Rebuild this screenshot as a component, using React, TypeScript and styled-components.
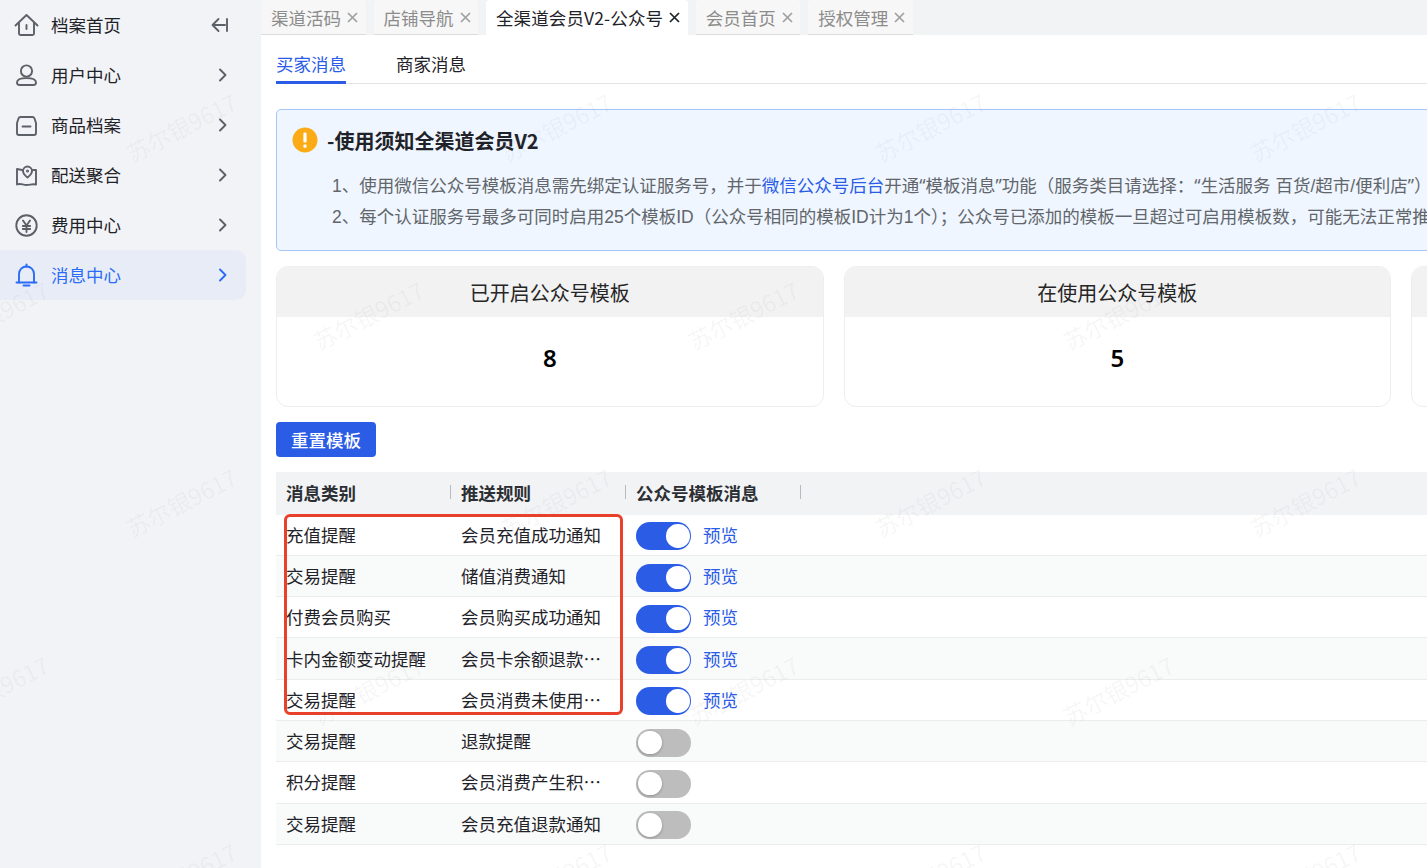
import React from 'react';
import styled, { createGlobalStyle } from 'styled-components';

const Global = createGlobalStyle`
  html, body { margin: 0; padding: 0; background: #fff; }
  body { font-family: "Noto Sans CJK SC", "Noto Sans", sans-serif; color: #1f2329; }
  * { box-sizing: border-box; }
`;

const Page = styled.div`
  position: relative;
  display: flex;
  width: 1427px;
  height: 868px;
  overflow: hidden;
  font-size: 17.5px;
`;

const Sidebar = styled.aside`
  flex: 0 0 261px;
  background: #f2f3f6;
  display: flex;
  flex-direction: column;
  padding-right: 15px;
`;

const NavRow = styled.div<{ $active?: boolean }>`
  height: 50px;
  display: flex;
  align-items: center;
  padding: 0 17px 0 14px;
  border-radius: 0 10px 10px 0;
  background: ${p => (p.$active ? '#e8ecf7' : 'transparent')};
  color: ${p => (p.$active ? '#2b6cf6' : '#1f2329')};
  svg { flex: none; }
`;

const NavLabel = styled.span`
  margin-left: 12px;
  flex: 1;
  line-height: 50px;
`;

const Main = styled.main`
  flex: 1;
  min-width: 0;
  display: flex;
  flex-direction: column;
  overflow: hidden;
`;

const TabBar = styled.div`
  height: 35px;
  flex: none;
  background: #f2f3f5;
  display: flex;
  gap: 8px;
`;

const Tab = styled.div<{ $active?: boolean }>`
  height: 35px;
  padding: 0 7.5px 0 10px;
  display: flex;
  align-items: center;
  gap: 6px;
  white-space: nowrap;
  letter-spacing: ${p => (p.$active ? '0.12px' : '0')};
  border-radius: 4px 4px 0 0;
  background: ${p => (p.$active ? '#fff' : '#f7f7f7')};
  border-bottom: ${p => (p.$active ? 'none' : '1px solid #dcdcdc')};
  color: ${p => (p.$active ? '#1f2329' : '#8c8c8c')};
  svg { flex: none; }
`;

const Content = styled.div`
  flex: 1;
  padding: 0 0 0 15px;
  background: #fff;
  width: 1320px;
`;

const SubTabs = styled.div`
  height: 49px;
  display: flex;
  gap: 50px;
  border-bottom: 1px solid #e3e4e6;
`;

const SubTab = styled.div<{ $active?: boolean }>`
  height: 49px;
  line-height: 58px;
  color: ${p => (p.$active ? '#2b5ce6' : '#1f2329')};
  border-bottom: ${p => (p.$active ? '3px solid #2b5ce6' : 'none')};
`;

const Notice = styled.section`
  margin-top: 25px;
  height: 142px;
  border: 1px solid #a9c6fb;
  border-radius: 5px;
  background: #eff6ff;
  padding: 16px 0 0 15px;
`;

const NoticeHead = styled.div`
  display: flex;
  align-items: center;
  gap: 9px;
  height: 28px;
`;

const NoticeTitle = styled.h2`
  margin: 0;
  font-size: 20px;
  font-weight: 700;
  color: #1f2329;
`;

const NoticeLine = styled.p`
  margin: 0 0 0 40px;
  height: 32px;
  line-height: 32px;
  white-space: nowrap;
  color: #62666b;
  font-family: "Liberation Sans", "Noto Sans CJK SC", sans-serif;
  &:first-of-type { margin-top: 15px; }
`;

const Quote = styled.span`
  font-family: "Noto Sans", sans-serif;
`;

const Link = styled.a`
  color: #2b5ce6;
`;

const Cards = styled.div`
  margin-top: 15px;
  display: flex;
  gap: 20px;
`;

const Card = styled.div`
  flex: 0 0 547.5px;
  height: 141px;
  border: 1px solid #eeeeee;
  border-radius: 12px;
  overflow: hidden;
`;

const CardHead = styled.div`
  height: 50px;
  background: #f2f2f2;
  text-align: center;
  line-height: 52px;
  font-size: 20px;
  color: #262626;
`;

const CardValue = styled.div`
  height: 80px;
  display: flex;
  align-items: center;
  justify-content: center;
  font-size: 24px;
  font-weight: 600;
  color: #000;
  font-family: "Noto Sans", sans-serif;
`;

const Reset = styled.button`
  display: block;
  margin-top: 15px;
  width: 100px;
  height: 35px;
  border: 0;
  border-radius: 4px;
  background: #2b5ce6;
  color: #fff;
  font: 500 17.5px "Noto Sans CJK SC", "Noto Sans", sans-serif;
  padding: 0;
`;

const Table = styled.div`
  margin-top: 15px;
`;

const Row = styled.div<{ $alt?: boolean }>`
  height: 41.28px;
  display: grid;
  grid-template-columns: 175px 175px 1fr;
  align-items: center;
  border-bottom: 1px solid #ebedec;
  background: ${p => (p.$alt ? '#f9fafa' : '#fff')};
`;

const HeadRow = styled.div`
  height: 42.7px;
  display: grid;
  grid-template-columns: 175px 175px 175px;
  align-items: center;
  background: #f2f3f5;
`;

const HeadCell = styled.div`
  position: relative;
  padding: 0 0 2px 10px;
  font-weight: 700;
  color: #2c2f33;
  &::after {
    content: "";
    position: absolute;
    right: 0;
    top: 50%;
    margin-top: -8px;
    width: 1px;
    height: 14px;
    background: #b4bac4;
  }
`;

const Cell = styled.div`
  padding: 0 0 1px 10px;
  overflow: hidden;
  line-height: 39px;
  color: #1f2329;
`;

const RuleText = styled.div`
  max-width: 140px;
  overflow: hidden;
  white-space: nowrap;
  text-overflow: ellipsis;
`;

const SwitchCell = styled.div`
  display: flex;
  align-items: center;
  padding: 3px 0 0 10px;
  gap: 12px;
`;

const Toggle = styled.div<{ $on: boolean }>`
  position: relative;
  width: 55px;
  height: 28px;
  border-radius: 14px;
  background: ${p => (p.$on ? '#2b5ce6' : '#bdbdbd')};
`;

const Knob = styled.div<{ $on: boolean }>`
  position: absolute;
  top: 2px;
  left: ${p => (p.$on ? '30px' : '2px')};
  width: 23.5px;
  height: 23.5px;
  border-radius: 50%;
  background: #fff;
  box-shadow: ${p => (p.$on ? 'none' : '0 1px 3px rgba(0,0,0,0.25)')};
`;

const Preview = styled.a`
  color: #2b5ce6;
  margin-bottom: 4px;
`;

const Annotation = styled.div`
  position: absolute;
  left: 284px;
  top: 514px;
  width: 339px;
  height: 201px;
  border: 3px solid #e8402a;
  border-radius: 6px;
  pointer-events: none;
`;

const Mark = styled.div`
  position: absolute;
  font-size: 23px;
  line-height: 34px;
  color: rgba(120, 125, 135, 0.07);
  transform: rotate(-27deg);
  white-space: nowrap;
  pointer-events: none;
  font-family: "Noto Sans CJK SC", sans-serif;
`;

const Ic: React.FC<{ children: React.ReactNode; size?: number }> = ({ children, size = 25 }) => (
  <svg width={size} height={size} viewBox="0 0 25 25" fill="none" stroke="currentColor" strokeWidth="1.9" strokeLinecap="round" strokeLinejoin="round">
    {children}
  </svg>
);

const grey = '#5c6068';

const icons = [
  <Ic key="h"><g stroke={grey}><path d="M1.5 12.5 12.5 2l11 10.5" /><path d="M5 10v10.5a1.5 1.5 0 0 0 1.5 1.5h12a1.5 1.5 0 0 0 1.5-1.5V10" /><path d="M12.5 12v4" /></g></Ic>,
  <Ic key="u"><g stroke={grey}><circle cx="12.5" cy="8" r="5.6" /><path d="M3 19.5c0-2.8 4-4.4 9.5-4.4S22 16.7 22 19.5c0 1.6-1 2.5-2.6 2.5H5.600C4 22 3 21.1 3 19.500z" /></g></Ic>,
  <Ic key="p"><g stroke={grey}><path d="M6.500 4h12c1 0 1.700.6 2 1.500L22 10v10a2 2 0 0 1-2 2H5a2 2 0 0 1-2-2V10l1.500-4.500C4.800 4.600 5.500 4 6.500 4z" /><path d="M8.500 13.500h8" /></g></Ic>,
  <Ic key="m"><g stroke={grey}><path d="M8 7 3 6v15.500c3-1.500 6 .5 9.500.5s6-1.500 9.500-.5V7h-3" /><path d="M13.500 14.500c-2.500-2-4.500-4-4.500-6.500a4.500 4.500 0 0 1 9 0c0 2.500-2 4.500-4.500 6.500z" /><circle cx="13.500" cy="8" r=".6" /></g></Ic>,
  <Ic key="y"><g stroke={grey}><circle cx="12.500" cy="12.500" r="10.200" /><path d="m9 7.500 3.500 5 3.500-5M8.800 13h7.400M8.800 16h7.400M12.500 12.500V19" /></g></Ic>,
  <Ic key="b"><path d="M5 19.500V11a7.500 7.500 0 0 1 15 0v8.500" /><path d="M2.500 19.500h20" /><path d="M9.500 22.500h6" /><path d="M12.500 1.500v2" /></Ic>,
];

const Chevron = ({ color = '#5c6068' }: { color?: string }) => (
  <svg width="12" height="14" viewBox="0 0 12 14" fill="none" stroke={color} strokeWidth="1.900" strokeLinecap="round" strokeLinejoin="round">
    <path d="m3 1.500 5.500 5.500L3 12.500" />
  </svg>
);

const Collapse = () => (
  <svg width="18" height="16" viewBox="0 0 18 16" fill="none" stroke="#5c6068" strokeWidth="1.900" strokeLinecap="round" strokeLinejoin="round">
    <path d="M1.500 8H14M7.500 2 1.500 8l6 6M16 2v12" />
  </svg>
);

const Close = ({ color }: { color: string }) => (
  <svg width="11" height="11" viewBox="0 0 11 11" fill="none" stroke={color} strokeWidth="1.700">
    <path d="m1 1 9 9M10 1l-9 9" />
  </svg>
);

const Warn = () => (
  <svg width="26" height="26" viewBox="0 0 26 26">
    <circle cx="13" cy="13" r="12.500" fill="#fbab15" />
    <rect x="11.400" y="5.500" width="3.200" height="10" rx="1.300" fill="#fff" />
    <rect x="11.400" y="17.500" width="3.200" height="3.200" rx="1" fill="#fff" />
  </svg>
);

const nav = ['档案首页', '用户中心', '商品档案', '配送聚合', '费用中心', '消息中心'];
const tabs = ['渠道活码', '店铺导航', '全渠道会员V2-公众号', '会员首页', '授权管理'];
const rows: [string, string, boolean][] = [
  ['充值提醒', '会员充值成功通知', true],
  ['交易提醒', '储值消费通知', true],
  ['付费会员购买', '会员购买成功通知', true],
  ['卡内金额变动提醒', '会员卡余额退款通知提醒', true],
  ['交易提醒', '会员消费未使用提醒通知', true],
  ['交易提醒', '退款提醒', false],
  ['积分提醒', '会员消费产生积分通知', false],
  ['交易提醒', '会员充值退款通知', false],
];
const centers: [number, number][] = [
  [181, 127], [556, 127], [930, 127], [1305, 127],
  [-7, 315], [368, 315], [743, 315], [1118, 315],
  [181, 502], [556, 502], [930, 502], [1305, 502],
  [-7, 690], [368, 690], [743, 690], [1118, 690],
  [181, 877], [556, 877], [930, 877], [1305, 877],
];

export default function App() {
  return (
    <Page lang="zh-CN">
      <Global />
      <Sidebar>
        {nav.map((n, i) => (
          <NavRow key={n} $active={i === 5}>
            {icons[i]}
            <NavLabel>{n}</NavLabel>
            {i === 0 ? <Collapse /> : <Chevron color={i === 5 ? '#2b6cf6' : '#5c6068'} />}
          </NavRow>
        ))}
      </Sidebar>
      <Main>
        <TabBar>
          {tabs.map((t, i) => (
            <Tab key={t} $active={i === 2}>
              {t}
              <Close color={i === 2 ? '#1f2329' : '#a0a0a0'} />
            </Tab>
          ))}
        </TabBar>
        <Content>
          <SubTabs>
            <SubTab $active>买家消息</SubTab>
            <SubTab>商家消息</SubTab>
          </SubTabs>
          <Notice>
            <NoticeHead>
              <Warn />
              <NoticeTitle>-使用须知全渠道会员V2</NoticeTitle>
            </NoticeHead>
            <NoticeLine>
              1、使用微信公众号模板消息需先绑定认证服务号，并于<Link>微信公众号后台</Link>开通<Quote>“</Quote>模板消息<Quote>”</Quote>功能（服务类目请选择：<Quote>“</Quote>生活服务 百货/超市/便利店<Quote>”</Quote>）
            </NoticeLine>
            <NoticeLine>
              2、每个认证服务号最多可同时启用25个模板ID（公众号相同的模板ID计为1个）；公众号已添加的模板一旦超过可启用模板数，可能无法正常推送
            </NoticeLine>
          </Notice>
          <Cards>
            <Card>
              <CardHead>已开启公众号模板</CardHead>
              <CardValue>8</CardValue>
            </Card>
            <Card>
              <CardHead>在使用公众号模板</CardHead>
              <CardValue>5</CardValue>
            </Card>
            <Card>
              <CardHead />
            </Card>
          </Cards>
          <Reset>重置模板</Reset>
          <Table>
            <HeadRow>
              <HeadCell>消息类别</HeadCell>
              <HeadCell>推送规则</HeadCell>
              <HeadCell>公众号模板消息</HeadCell>
            </HeadRow>
            {rows.map(([a, b, on], i) => (
              <Row key={i} $alt={i % 2 === 1}>
                <Cell>{a}</Cell>
                <Cell><RuleText>{b}</RuleText></Cell>
                <SwitchCell>
                  <Toggle $on={on}><Knob $on={on} /></Toggle>
                  {on && <Preview>预览</Preview>}
                </SwitchCell>
              </Row>
            ))}
          </Table>
        </Content>
      </Main>
      <Annotation />
      {centers.map(([x, y]) => (
        <Mark key={`${x}-${y}`} style={{ left: x - 60, top: y - 17 }}>苏尔银9617</Mark>
      ))}
    </Page>
  );
}
